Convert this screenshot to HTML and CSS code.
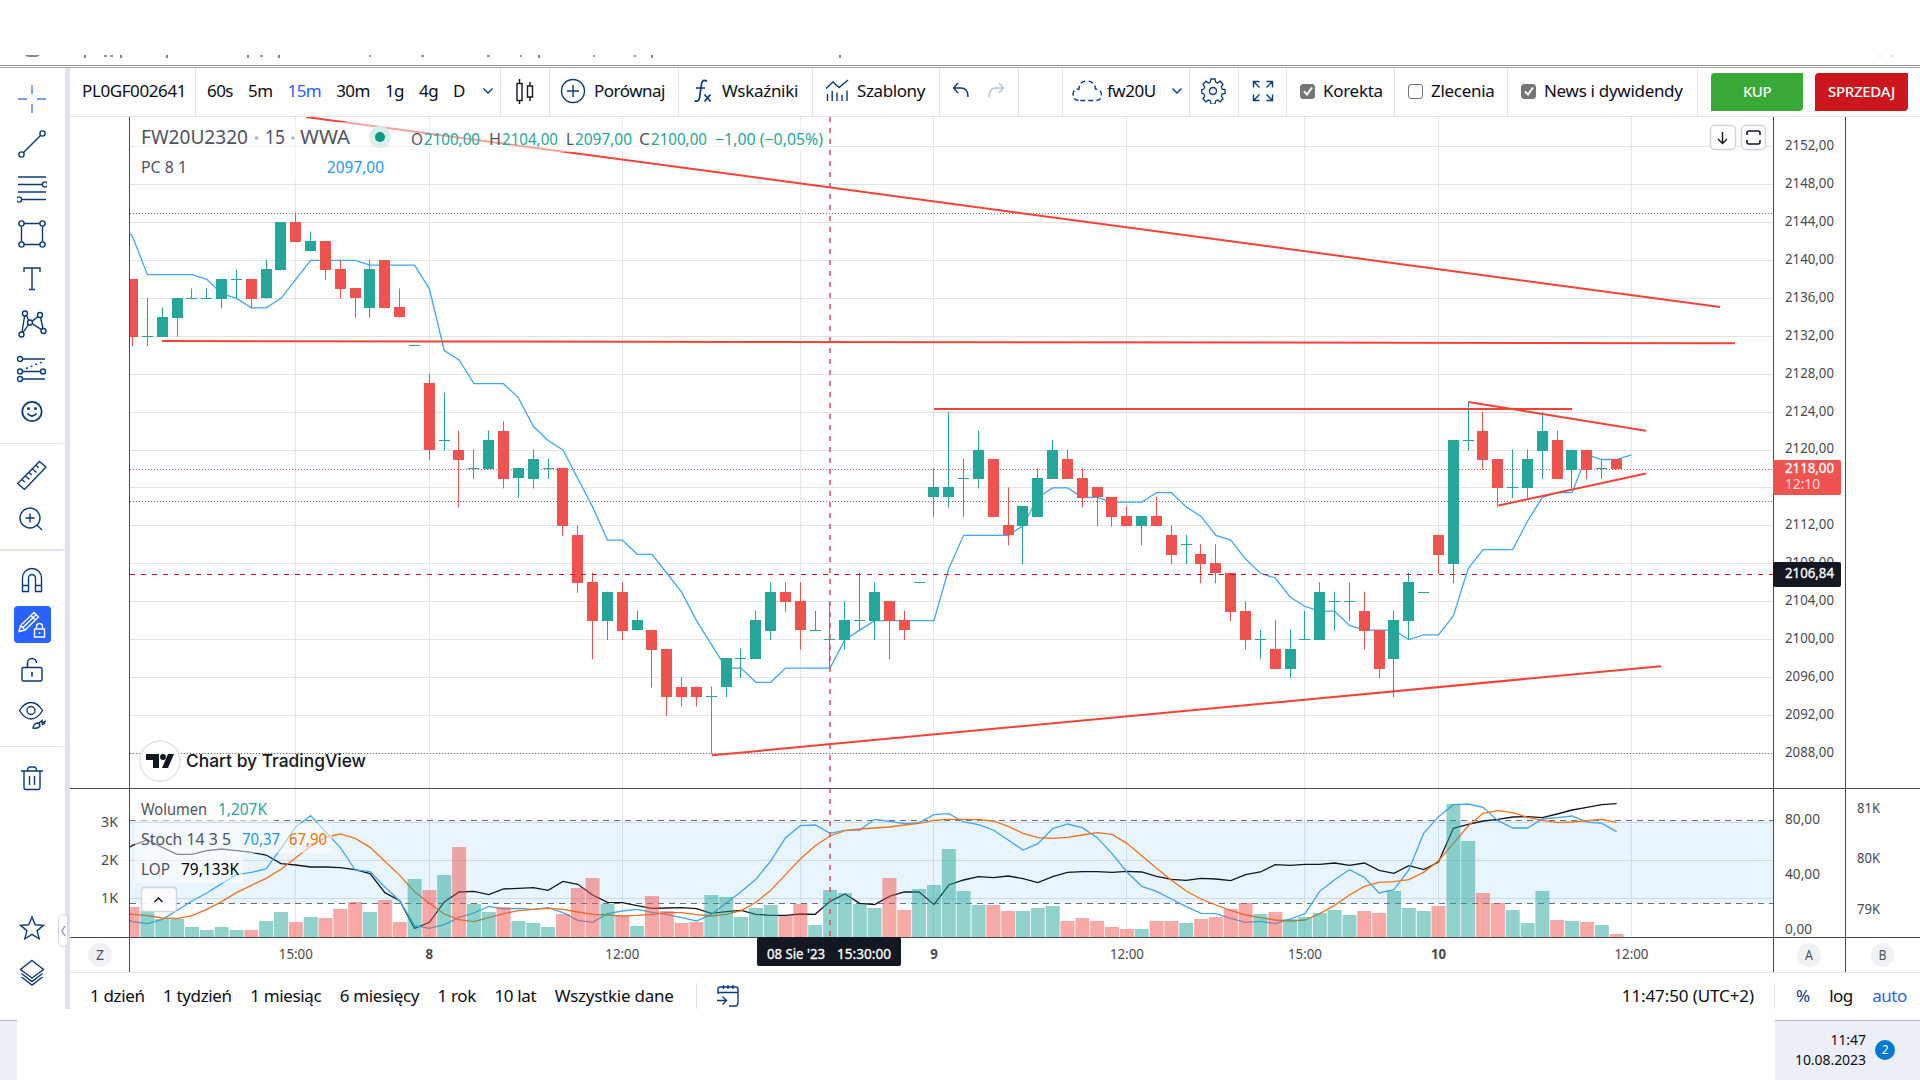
FILE: index.html
```html
<!DOCTYPE html>
<html lang="pl">
<head>
  <meta charset="UTF-8">
  <title>FW20U2320</title>
  <link rel="stylesheet" href="styles.css">
</head>
<body>
  <div class="browser-edge">
    <svg width="1920" height="3" viewBox="0 55 1920 3">
      <path d="M25 55h15q-2 2-4 2h-7q-3 0-4-2z" fill="#888"/>
      <path d="M85 55v3M121 55v3M167 55v3M248 55v3M279 55v3M539 55v3M652 55v3M840 55v3" stroke="#555" stroke-width="1.4"/>
      <path d="M104 56h3M110 56h3M260 56h3M369 56h2M421 56h3M487 56h3M520 56h2M593 56h2M634 56h2" stroke="#777" stroke-width="1.4"/>
      <path d="M1879 56h2M1891 56h3" stroke="#ddd"/>
    </svg>
  </div>
  <div class="terminal">
    <div class="tools">
      <div class="group group-draw">
        <div class="tool"><svg viewBox="0 0 30 30" class="blue"><path d="M15 1v9M15 20v9M1 15h9M20 15h9"/></svg></div>
        <div class="tool"><svg viewBox="0 0 30 30"><circle cx="4.500" cy="25.500" r="2.600"/><circle cx="25.500" cy="4.500" r="2.600"/><path d="M6.500 23.500l17-17"/></svg></div>
        <div class="tool"><svg viewBox="0 0 30 30"><path d="M1 3h28M1 10.500h24M1 18h28M5 25.500h24"/><circle cx="28" cy="10.500" r="2.600"/><circle cx="2" cy="25.500" r="2.600"/></svg></div>
        <div class="tool"><svg viewBox="0 0 30 30"><circle cx="4.500" cy="4.500" r="2.600"/><circle cx="25.500" cy="4.500" r="2.600"/><circle cx="4.500" cy="25.500" r="2.600"/><circle cx="25.500" cy="25.500" r="2.600"/><path d="M7 4.500h16M7 25.500h16M4.500 7v16M25.500 7v16"/></svg></div>
        <div class="tool"><svg viewBox="0 0 30 30"><path d="M7 8V4h16v4M15 4v21M12 25.500h6"/></svg></div>
        <div class="tool"><svg viewBox="0 0 30 30"><circle cx="8" cy="4.500" r="2.500"/><circle cx="23" cy="6" r="2.500"/><circle cx="13" cy="13.500" r="2.500"/><circle cx="4.500" cy="25.500" r="2.500"/><circle cx="26.500" cy="22" r="2.500"/><path d="M7.600 7L5 23M9.300 6.500l2.600 4.800M15 12.200l6-4.600M11.600 15.600L6 23.300M15 14.700l9.500 6M23.500 8.500l2.500 11"/></svg></div>
        <div class="tool"><svg viewBox="0 0 30 30"><circle cx="3" cy="5" r="2.500"/><circle cx="3" cy="17.500" r="2.500"/><circle cx="26" cy="17.500" r="2.500"/><circle cx="3" cy="25" r="2.500"/><path d="M5.500 5H28M5.500 17.500h18M5.500 25H28"/><path d="M9 14.500l17-7" stroke-dasharray="2 3"/></svg></div>
        <div class="tool"><svg viewBox="0 0 30 30"><circle cx="15" cy="12.500" r="9.700" stroke-width="1.800"/><circle cx="11.500" cy="9.500" r="1.500" class="solid"/><circle cx="18.500" cy="9.500" r="1.500" class="solid"/><path d="M10.500 14.500q4.500 5 9 0" stroke-width="1.800"/></svg></div>
      </div>
      <div class="group group-measure">
        <div class="tool"><svg viewBox="0 0 30 30"><path d="M.8 23.500L22.500 1.500l6.500 5.500L7.500 29.500zM5 19.500l2.800 2.600M8.500 16l4 3.600M12 12.400l2.700 2.600M15.500 8.900l4 3.600M19 5.300l2.700 2.500"/></svg></div>
        <div class="tool"><svg viewBox="0 0 30 30"><circle cx="13" cy="13" r="10"/><path d="M13 8.500v9M8.500 13h9M20 20l5 5"/></svg></div>
      </div>
      <div class="group group-lock">
        <div class="tool"><svg viewBox="0 0 30 30"><path d="M5.500 26.500V13a9.500 9.500 0 0 1 19 0v13.500h-6V13a3.500 3.500 0 0 0-7 0v13.500zM5.500 20.500h6M18.500 20.500h6"/></svg></div>
        <div class="tool"><div class="active"><svg viewBox="0 0 30 30"><path d="M2 21.500l1.500-6L17 2.500l4.500 4.500L8 20zM3.500 15.500L8 20M14 5.500l4.500 4.500M5.700 17.700L19 4.700"/><rect x="17.500" y="19" width="10" height="8"/><path d="M19.500 19v-2.500a3 3 0 0 1 6 0V19M22.500 22v2"/></svg></div></div>
        <div class="tool"><svg viewBox="0 0 30 30"><rect x="5" y="12.500" width="20" height="13.500" rx="1.500"/><path d="M10.500 12V8a4.500 4.500 0 0 1 9 0M15 17v4.500" stroke-width="1.600"/></svg></div>
        <div class="tool"><svg viewBox="0 0 30 30"><path d="M2.500 10.500q5-8 11.500-8t11.500 8q-5 8.500-11.500 8.500T2.500 10.500z"/><circle cx="14" cy="10.500" r="4"/><path d="M16 28q1-5 5-5 2 1 2 3-2 3-7 2zM22 23l3-2.500 0 2.500 4-2M25 25l3-2"/></svg></div>
      </div>
      <div class="group group-trash">
        <div class="tool"><svg viewBox="0 0 30 30"><path d="M4 8h22M7 8v16.500q0 2 2 2h12q2 0 2-2V8M10.500 8q0-4 2.500-4h4q2.500 0 2.500 4M12.500 13v9M17.500 13v9"/></svg></div>
      </div>
      <div class="group group-last">
        <div class="tool"><svg viewBox="0 0 30 30"><path d="M15 4l3.200 7.800 8.300.5-6.400 5.300 2.100 8.200-7.200-4.500-7.200 4.500 2.100-8.200-6.400-5.300 8.300-.5z"/></svg></div>
        <div class="tool"><svg viewBox="0 0 30 30"><path d="M15 2.500L26.500 11.500 15 20 3.500 11.500zM4.500 15.500l10.500 8 10.500-8M4.500 19l10.500 8 10.500-8"/></svg></div>
      </div>
      <div class="handle"><svg width="5" height="12" viewBox="0 0 5 12"><path d="M4 1L1 6l3 5"/></svg></div>
    </div>

    <div class="main">
      <div class="toolbar">
        <div class="cell symbol">PL0GF002641</div>
        <div class="cell intervals"><span>60s</span><span>5m</span><span class="on">15m</span><span>30m</span><span>1g</span><span>4g</span><span>D</span><svg width="12" height="8" viewBox="0 0 12 8"><path d="M1.500 1.500L6 6l4.500-4.500"/></svg></div>
        <div class="cell style"><svg width="20" height="26" viewBox="0 0 20 26" class="dark"><path d="M2 5.500h5v17H2zM4.500 1v4M4.500 23v3M12.500 8h5v11h-5zM15 4v4M15 19v4"/></svg></div>
        <div class="cell compare"><svg width="26" height="26" viewBox="0 0 26 26"><circle cx="13" cy="13" r="11.500"/><path d="M13 7v12M7 13h12"/></svg><span>Porównaj</span></div>
        <div class="cell indicators"><svg width="20" height="24" viewBox="0 0 20 24"><path d="M14 2.500q-4.500-3-5.500 2.500L6.500 19q-.700 4-5 3M3 9h9" stroke-width="1.700"/><path d="M11.500 15.500l6 7M17.500 15.500l-6 7" stroke-width="1.700"/></svg><span>Wskaźniki</span></div>
        <div class="cell templates"><svg width="24" height="24" viewBox="0 0 24 24"><path d="M1 9.500l7-6.500 6 5.500L23 1"/><path d="M2.500 22v-7M7.200 22V12M12 22v-8.500M17 22v-6M22 22V11.500"/></svg><span>Szablony</span></div>
        <div class="cell history"><svg width="18" height="18" viewBox="0 0 18 18"><path d="M6 1L1.500 6 6 11M2 6h7q7 0 7 9"/></svg><svg width="18" height="18" viewBox="0 0 18 18" class="off"><path d="M12 1l4.500 5-4.500 5M16 6H9q-7 0-7 9"/></svg></div>
        <div class="cell blank"></div>
        <div class="cell layout"><svg width="32" height="24" viewBox="0 0 32 24"><path d="M7.500 21.500q-5.500-.500-5.500-6t6-5.500q.500-8 8-8t8.500 8q6 .500 6 6t-6 5.500z" stroke-dasharray="5 3"/></svg><span>fw20U</span><svg width="12" height="8" viewBox="0 0 12 8" class="caret"><path d="M1.500 1.500L6 6l4.500-4.500"/></svg></div>
        <div class="cell gear"><svg width="26" height="26" viewBox="0 0 26 26"><path d="M10.700 1h4.600l.6 3.300 2.300 1 2.700-2 3.200 3.200-1.900 2.800.9 2.200 3.300.5v4l-3.300.7-.9 2.300 1.900 2.700-3.200 3.200-2.700-1.900-2.300.9-.6 3.300h-4.600l-.6-3.300-2.300-.9-2.700 1.900-3.200-3.200 1.900-2.700-.9-2.300L.6 16v-4l2.300-.5.9-2.200-1.900-2.800 3.200-3.200 2.700 2 2.300-1z" transform="translate(1.300 0) scale(.900 .960)"/><circle cx="13" cy="13" r="3.500"/></svg></div>
        <div class="cell full"><svg width="22" height="22" viewBox="0 0 22 22"><path d="M1.500 7.500v-6h6M1.500 1.500l6 6M14.500 1.500h6v6M20.500 1.500l-6 6M1.500 14.500v6h6M1.500 20.500l6-6M20.500 14.500v6h-6M20.500 20.500l-6-6"/></svg></div>
        <div class="cell check c1"><i class="box ticked"><svg width="12" height="12" viewBox="0 0 12 12"><path d="M2 6.500L5 9.500 10 2.500"/></svg></i><span>Korekta</span></div>
        <div class="cell check c2"><i class="box"></i><span>Zlecenia</span></div>
        <div class="cell check c3"><i class="box ticked"><svg width="12" height="12" viewBox="0 0 12 12"><path d="M2 6.500L5 9.500 10 2.500"/></svg></i><span>News i dywidendy</span></div>
        <div class="trade buy">KUP</div>
        <div class="trade sell">SPRZEDAJ</div>
      </div>

      <svg id="chart" class="chart" width="1850" height="855" viewBox="70 117 1850 855"></svg>

      <div class="footer">
        <div class="ranges"><span>1 dzień</span><span>1 tydzień</span><span>1 miesiąc</span><span>6 miesięcy</span><span>1 rok</span><span>10 lat</span><span>Wszystkie dane</span></div>
        <div class="goto"><svg width="24" height="24" viewBox="0 0 24 24"><path d="M2 10V5q0-2 2-2h16q2 0 2 2v14q0 3-3 3h-6M2 8.500h20M7.500 1v4M12 1v4M17 1v4M1 16.500h9M6.500 12.500l4 4-4 4"/></svg></div>
        <div class="clock">11:47:50 (UTC+2)</div>
        <div class="scale"><span class="pct">%</span><span>log</span><span class="on">auto</span></div>
      </div>
    </div>
  </div>
  <div class="taskbar">
    <div class="start"></div>
    <div class="tray">
      <div class="time">11:47<br>10.08.2023</div>
      <div class="badge">2</div>
    </div>
  </div>
  <script src="chart.js"></script>
</body>
</html>
```
FILE: styles.css
```css
* {
  box-sizing: border-box;
}
body {
  margin: 0;
  width: 1920px;
  height: 1080px;
  overflow: hidden;
  background: #fff;
  color: #0c0e15;
  font-family: "Noto Sans", "Open Sans", sans-serif;
  font-size: 17px;
  letter-spacing: -0.5px;
}
svg {
  fill: none;
  stroke: #0b3a78;
  stroke-width: 1.4;
  flex: none;
}
.browser-edge {
  height: 68px;
  padding-top: 55px;
  border-bottom: 1px solid #aaa;
}
.browser-edge svg {
  display: block;
  stroke: none;
}
.browser-edge::after {
  content: "";
  display: block;
  margin-top: 7px;
  border-top: 1px solid #999;
}
.terminal {
  display: flex;
  height: 941px;
}

/* left drawing tools */
.tools {
  width: 70px;
  border-right: 5px solid #e0e3eb;
  display: flex;
  flex-direction: column;
  position: relative;
}
.group {
  flex: none;
  border-bottom: 1px solid #e0e3eb;
  border-radius: 0 0 4px 0;
}
.group-draw {
  height: 376px;
  padding-top: 8px;
}
.group-measure {
  height: 107px;
  padding-top: 8px;
  border-bottom-width: 2px;
}
.group-lock {
  height: 196px;
  padding-top: 6px;
}
.group-trash {
  height: 157px;
  padding-top: 8px;
  border: none;
}
.group-last {
  border: none;
  padding-top: 1px;
}
.tool {
  height: 45px;
  padding-right: 1px;
  display: flex;
  align-items: center;
  justify-content: center;
}
.tool svg {
  width: 30px;
  height: 30px;
}
.tool .active svg {
  stroke: #fff;
}
.tool .blue {
  stroke: #4f7bff;
}
.solid {
  fill: #0b3a78;
  stroke: none;
}
.active {
  width: 37px;
  height: 37px;
  border-radius: 4px;
  background: #2962ff;
  display: flex;
  align-items: center;
  justify-content: center;
}
.handle {
  position: absolute;
  left: 58px;
  top: 846px;
  width: 10px;
  height: 33px;
  border: 1px solid #d5d9e4;
  border-radius: 5px;
  background: #fff;
  display: flex;
  align-items: center;
  justify-content: center;
}
.handle svg {
  stroke: #8a9bb8;
}

/* top toolbar */
.main {
  width: 1850px;
}
.toolbar {
  height: 49px;
  display: flex;
  border-bottom: 1px solid #e0e3eb;
}
.cell {
  border-right: 1px solid #e0e3eb;
  display: flex;
  align-items: center;
  padding-bottom: 2px;
  white-space: nowrap;
}
.cell span {
  margin-top: -2px;
}
.symbol {
  width: 126px;
  padding-left: 12px;
  padding-bottom: 4px;
  letter-spacing: -0.4px;
}
.intervals {
  width: 305px;
  padding-left: 11px;
  gap: 15px;
  letter-spacing: -0.55px;
}
.intervals svg {
  margin-left: 2px;
}
.on {
  color: #2962ff;
}
.style {
  width: 49px;
  justify-content: center;
}
.dark {
  stroke: #131722;
}
.compare {
  width: 129px;
  padding-left: 10px;
  gap: 8px;
}
.indicators {
  width: 134px;
  padding-left: 14px;
  gap: 9px;
  letter-spacing: -0.3px;
}
.templates {
  width: 127px;
  padding-left: 12px;
  gap: 8px;
  letter-spacing: -0.4px;
}
.history {
  width: 79px;
  padding-left: 12px;
  gap: 17px;
}
.off {
  opacity: .3;
}
.blank {
  width: 44px;
}
.layout {
  width: 127px;
  padding-left: 8px;
  gap: 4px;
}
.caret {
  margin-left: 11px;
}
.gear {
  width: 49px;
  padding-right: 2px;
  justify-content: center;
}
.full {
  width: 48px;
  justify-content: center;
}
.check {
  padding-left: 13px;
  gap: 8px;
  letter-spacing: -0.3px;
}
.c1 {
  width: 108px;
}
.c2 {
  width: 113px;
}
.c3 {
  width: 190px;
}
.box {
  width: 15px;
  height: 15px;
  border: 1px solid #767676;
  border-radius: 3px;
  display: flex;
  align-items: center;
  justify-content: center;
}
.ticked {
  background: #757575;
}
.ticked svg {
  stroke: #fff;
  stroke-width: 2;
}
.trade {
  width: 92px;
  height: 38px;
  margin: 5px 0 0 13px;
  border-radius: 4px 0;
  background: #38a935;
  color: #fff;
  font-size: 15px;
  font-weight: 500;
  line-height: 37px;
  text-align: center;
}
.sell {
  width: 93px;
  margin-left: 12px;
  background: #cb161d;
  letter-spacing: -0.3px;
}

/* chart */
.chart {
  display: block;
  stroke: none;
  letter-spacing: 0;
}

/* bottom bar */
.footer {
  height: 37px;
  border-top: 1px solid #e0e3eb;
  padding-top: 10px;
  display: flex;
  line-height: 26px;
  white-space: nowrap;
}
.ranges {
  width: 627px;
  padding-left: 20px;
  display: flex;
  gap: 18.5px;
  letter-spacing: -0.36px;
  border-right: 1px solid #e0e3eb;
}
.ranges span:last-child {
  letter-spacing: -0.25px;
}
.goto {
  width: 900px;
  padding: 1px 0 0 19px;
}
.clock {
  width: 178px;
  padding-right: 20px;
  text-align: right;
  letter-spacing: -0.1px;
  border-right: 1px solid #e0e3eb;
}
.scale {
  display: flex;
  padding-left: 21px;
  gap: 19.5px;
}
.pct {
  color: #0b3a78;
}

/* system tray */
.taskbar {
  margin-top: 11px;
  height: 60px;
  display: flex;
  justify-content: space-between;
}
.start {
  width: 17px;
  background: #eceff8;
  border-top: 1px solid #bbb;
}
.tray {
  width: 145px;
  background: #eceff8;
  border-top: 1px solid #b8bac4;
  display: flex;
  align-items: center;
  justify-content: flex-end;
  padding: 0 25px 2px 0;
  gap: 9px;
}
.time {
  font-size: 14px;
  line-height: 20px;
  letter-spacing: -0.05px;
  text-align: right;
}
.badge {
  width: 20px;
  height: 20px;
  border-radius: 50%;
  background: #0078d4;
  color: #fff;
  font-size: 12px;
  line-height: 20px;
  text-align: center;
}
```
FILE: chart.js
```js
// open/close direction, body top, body bottom, high, low
var bars = [
  'r 2138 2132 2138 2131', 'g 2132 2132 2136 2131', 'g 2134 2132 2135 2132', 'g 2136 2134 2136 2132',
  'g 2136 2136 2137 2136', 'g 2136 2136 2137 2136', 'g 2138 2136 2138 2135', 'g 2138 2138 2139 2136',
  'r 2138 2136 2138 2135', 'g 2139 2136 2140 2136', 'g 2144 2139 2144 2139', 'r 2144 2142 2145 2142',
  'g 2142 2141 2143 2141', 'r 2142 2139 2142 2138', 'r 2139 2137 2140 2136', 'r 2137 2136 2137 2134',
  'g 2139 2135 2140 2134', 'r 2140 2135 2140 2135', 'r 2135 2134 2137 2134', 'g 2131 2131 2131 2131',
  'r 2127 2120 2128 2119', 'g 2121 2121 2126 2120', 'r 2120 2119 2122 2114', 'g 2118 2118 2120 2117',
  'g 2121 2118 2122 2118', 'r 2122 2117 2123 2116', 'g 2118 2117 2118 2115', 'g 2119 2117 2120 2116',
  'g 2118 2118 2119 2117', 'r 2118 2112 2118 2111', 'r 2111 2106 2112 2105', 'r 2106 2102 2107 2098',
  'g 2105 2102 2105 2100', 'r 2105 2101 2106 2100', 'g 2102 2101 2103 2101', 'r 2101 2099 2101 2095',
  'r 2099 2094 2099 2092', 'r 2095 2094 2096 2093', 'r 2095 2094 2095 2093', 'g 2094 2094 2095 2088',
  'g 2098 2095 2098 2094', 'g 2098 2098 2099 2096', 'g 2102 2098 2103 2098', 'g 2105 2101 2106 2100',
  'r 2105 2104 2106 2103', 'r 2104 2101 2106 2099', 'g 2101 2101 2103 2101', 'g 2100 2100 2104 2097',
  'g 2102 2100 2104 2099', 'g 2102 2102 2107 2101', 'g 2105 2102 2106 2100', 'r 2104 2102 2104 2098',
  'r 2102 2101 2103 2100', 'g 2106 2106 2106 2106', 'g 2116 2115 2118 2113', 'g 2116 2115 2124 2114',
  'g 2117 2117 2119 2113', 'g 2120 2117 2122 2116', 'r 2119 2113 2119 2113', 'r 2112 2111 2116 2110',
  'g 2114 2112 2114 2108', 'g 2117 2113 2118 2113', 'g 2120 2117 2121 2117', 'r 2119 2117 2120 2117',
  'r 2117 2115 2118 2114', 'r 2116 2115 2116 2112', 'r 2115 2113 2115 2112', 'r 2113 2112 2114 2112',
  'g 2113 2112 2113 2110', 'r 2113 2112 2115 2112', 'r 2111 2109 2112 2108', 'g 2110 2110 2111 2108',
  'r 2109 2108 2110 2106', 'r 2108 2107 2110 2106', 'r 2107 2103 2107 2102', 'r 2103 2100 2104 2099',
  'g 2100 2100 2101 2098', 'r 2099 2097 2102 2097', 'g 2099 2097 2101 2096', 'g 2100 2100 2103 2100',
  'g 2105 2100 2106 2100', 'g 2104 2104 2105 2101', 'g 2104 2104 2106 2102', 'r 2103 2101 2105 2099',
  'r 2101 2097 2101 2096', 'g 2102 2098 2103 2094', 'g 2106 2102 2107 2100', 'g 2105 2105 2105 2105',
  'r 2111 2109 2111 2107', 'g 2121 2108 2121 2106', 'g 2121 2121 2125 2120', 'r 2122 2119 2124 2118',
  'r 2119 2116 2119 2114', 'g 2116 2116 2120 2115', 'g 2119 2116 2120 2115', 'g 2122 2120 2124 2117',
  'r 2121 2117 2122 2117', 'g 2120 2118 2120 2116', 'r 2120 2118 2120 2117', 'g 2118 2118 2119 2117',
  'r 2119 2118 2119 2118'
].map(function (s) {
  var p = s.split(' ');
  return { dir: p[0], top: +p[1], bottom: +p[2], high: +p[3], low: +p[4] };
});

// bar heights of the volume pane
var volume = [30,26,18,18,10,7,10,7,7,16,25,15,20,19,28,35,25,37,15,58,47,62,90,33,25,30,16,14,10,23,49,59,33,21,11,41,26,14,15,
  42,40,20,29,32,21,33,12,47,44,33,29,59,27,48,52,88,46,32,32,26,26,29,31,16,19,16,10,8,8,16,16,14,18,20,28,34,23,
  25,18,20,24,27,22,26,24,46,29,26,31,133,96,44,34,27,14,46,17,16,15,12,3];

// oscillator curves, in thirds of a pixel below y = 780
var stochK = [425,431,418,391,363,339,311,284,277,267,205,140,107,155,203,270,275,321,363,437,445,434,412,399,379,387,385,388,383,398,421,427,401,393,388,397,403,413,423,
  403,369,335,298,243,173,137,135,160,151,150,118,124,131,128,104,101,126,134,150,180,210,191,146,132,143,173,221,276,319,334,357,380,400,401,415,427,424,
  431,417,401,334,299,269,292,339,329,270,160,110,74,72,82,122,144,144,117,113,108,126,130,155];
var stochD = [403,407,414,416,407,388,365,338,316,295,268,233,199,172,162,175,202,244,286,335,370,402,419,425,413,401,392,388,385,388,396,403,405,408,406,403,398,398,404,
  408,403,392,367,331,284,237,197,168,152,147,144,141,135,130,121,118,118,119,123,139,160,173,175,172,165,158,163,190,227,265,301,333,357,375,391,405,413,
  420,423,420,401,376,345,319,307,305,299,277,242,190,138,100,92,98,112,121,128,126,122,118,127];
var lop = [196,180,202,223,223,212,207,212,217,225,251,255,261,261,263,269,281,338,362,445,427,366,336,334,344,327,325,323,331,304,313,345,367,368,377,385,384,383,386,
  400,395,391,403,406,406,402,403,364,342,370,374,349,336,336,374,315,300,290,293,288,296,308,290,277,275,275,277,274,276,289,298,301,295,297,302,284,276,
  254,256,253,253,249,256,249,271,280,257,269,246,145,133,123,118,111,110,113,102,90,82,74,71];

var GREEN = '#26a69a', RED = '#ef5350';
var out = '';

function x(i) { return 132.6 + 14.84 * i; }
function y(p) { return 222.5 + (2144 - p) * 9.48; }
function line(x1, y1, x2, y2, color, width, dash) {
  out += '<path d="M' + x1 + ' ' + y1 + 'L' + x2 + ' ' + y2 + '" stroke="' + color + '" stroke-width="' + (width || 1) + '"' + (dash ? ' stroke-dasharray="' + dash + '"' : '') + '/>';
}
function rect(rx, ry, w, h, fill, extra) {
  out += '<rect x="' + rx + '" y="' + ry + '" width="' + w + '" height="' + h + '" fill="' + fill + '" ' + (extra || '') + '/>';
}
// label squeezed between x1 and x2
function text(s, x1, x2, base, size, color, extra) {
  out += '<text x="' + x1 + '" y="' + base + '" font-size="' + size + '" fill="' + color + '" textLength="' + (x2 - x1) + '" lengthAdjust="spacingAndGlyphs" ' + (extra || '') + '>' + s + '</text>';
}
function curve(points, color) {
  out += '<polyline points="' + points.join(' ') + '" stroke="' + color + '" stroke-width="1.3"/>';
}
function osc(values, first, color) {
  curve(['130,' + (780 + first / 3)].concat(values.map(function (v, i) { return x(i) + ',' + (780 + v / 3); })), color);
}

// grid
[11, 20, 33, 45, 54, 67, 79, 88, 101].forEach(function (i) {
  line(Math.floor(x(i)) + .5, 117, Math.floor(x(i)) + .5, 937, '#e6e6e6');
});
for (var p = 2152; p >= 2088; p -= 4) {
  line(130, Math.floor(y(p)) + .5, 1773, Math.floor(y(p)) + .5, '#e3e3e3');
}
[822.5, 860.5, 898.5].forEach(function (v) { line(130, v, 1773, v, '#e3e3e3'); });

// lower pane
rect(130, 820.5, 1643, 83, '#2196f3', 'opacity=".1"');
line(130, 820.5, 1773, 820.5, '#6b7080', 1, '6 5');
line(130, 903.5, 1773, 903.5, '#6b7080', 1, '6 5');
osc(lop, 201, '#131722');
osc(stochK, 421, '#42a5f5');
osc(stochD, 402, '#f2711c');
volume.forEach(function (h, i) {
  var left = Math.max(130, x(i) - 7);
  rect(left.toFixed(1), 937 - h, (x(i) + 7 - left).toFixed(1), h, bars[i].dir == 'g' ? GREEN : RED, 'opacity=".5"');
});

// price levels
[[213.5, '#777'], [469.5, RED], [501.5, '#777'], [753.5, '#777']].forEach(function (l) {
  line(130, l[0], 1773, l[0], l[1], 1, '1 2');
});

// mid of the high/low range over the previous 8 bars
var channel = [2142.5, 2138.5, 2138.5, 2138.5, 2138.5, 2138, 2136.5, 2136];
for (var i = 8; i <= bars.length; i++) {
  var part = bars.slice(i - 8, i);
  var hi = Math.max.apply(null, part.map(function (b) { return b.high; }));
  var lo = Math.min.apply(null, part.map(function (b) { return b.low; }));
  channel.push((hi + lo) / 2);
}
curve(['130,233.5'].concat(channel.map(function (v, i) { return x(i) + ',' + y(v); })), '#42a5f5');

// candles
bars.forEach(function (b, i) {
  var c = b.dir == 'g' ? GREEN : RED;
  var mid = Math.floor(x(i) - .1);
  if (b.high != b.low) line(mid + .5, y(b.high) - .5, mid + .5, y(b.low) + .5, c);
  var left = Math.max(130, mid - 5);
  rect(left, Math.round(y(b.top) - .5), mid + 6 - left, Math.max(1, Math.round(y(b.bottom) - y(b.top)) + 1), c);
});

// trend lines
[[306, 117, 1720, 307], [162, 341, 1735, 343.3], [934, 409, 1572, 409], [1468.4, 402, 1646, 430.7],
 [1498.5, 505.5, 1646, 473.4], [712, 755.3, 1661, 666.2]].forEach(function (t) {
  line(t[0], t[1], t[2], t[3], '#f44336', 2);
});

// crosshair
line(130, 574.5, 1773, 574.5, '#c8102e', 1, '5 6');
line(830, 117, 830, 937, '#d8505f', 1.5, '5 6');

// frames
line(129.5, 117, 129.5, 972, '#4a4a4a');
line(1773.5, 117, 1773.5, 972, '#4a4a4a');
line(1845.5, 117, 1845.5, 972, '#4a4a4a');
line(70, 788.5, 1920, 788.5, '#4a4a4a');
line(70, 937.5, 1920, 937.5, '#4a4a4a');

// main legend
rect(135, 122, 692, 30, '#fff', 'opacity=".5"');
rect(135, 153, 254, 28, '#fff', 'opacity=".5"');
text('FW20U2320', 141, 248, 144, 19, '#50535e');
text('15', 265, 285, 144, 19, '#50535e');
text('WWA', 300, 350, 144, 19, '#50535e');
out += '<circle cx="256.500" cy="138" r="1.800" fill="#b2b5be"/><circle cx="293" cy="138" r="1.800" fill="#b2b5be"/>';
out += '<circle cx="380" cy="137" r="11" fill="#d9efec"/><circle cx="380" cy="137" r="5" fill="#089981"/>';
[['O', '2100,00', 411, 424, 480], ['H', '2104,00', 489, 502, 558], ['L', '2097,00', 566, 575, 632], ['C', '2100,00', 639, 651, 707]].forEach(function (v) {
  text(v[0], v[2], v[3] - 1, 145, 15.5, '#50535e');
  text(v[1], v[3], v[4], 145, 15.5, GREEN);
});
text('−1,00 (−0,05%)', 715, 823, 145, 15.5, GREEN);
text('PC 8 1', 141, 187, 173, 15.5, '#50535e');
text('2097,00', 327, 384, 173, 15.5, '#2196f3');

// lower legend
rect(135, 793, 140, 28, '#fff', 'opacity=".5"');
rect(135, 823, 197, 30, '#fff', 'opacity=".5"');
rect(135, 853, 108, 30, '#fff', 'opacity=".5"');
text('Wolumen', 141, 207, 815, 15.5, '#50535e');
text('1,207K', 218, 267, 815, 15.5, GREEN);
text('Stoch 14 3 5', 141, 231, 845, 15.5, '#50535e');
text('70,37', 242, 280, 845, 15.5, '#2196f3');
text('67,90', 289, 327, 845, 15.5, '#ff6d00');
text('LOP', 141, 170, 875, 15.5, '#50535e');
text('79,133K', 181, 239, 875, 15.5, '#000');
rect(141.5, 887.5, 35, 24, '#fff', 'rx="3" stroke="#d1d4dc" opacity=".9"');
out += '<path d="M154.500 902l4-4 4 4" stroke="#131722" stroke-width="1.500"/>';

// logo
out += '<circle cx="160" cy="761" r="20" fill="#fff" stroke="#e0e3eb"/>';
out += '<path d="M146 754h13v14h-6v-8h-7zM168 754h6l-6 14h-6z" fill="#131722"/><circle cx="163" cy="757" r="2.900" fill="#131722"/>';
text('Chart by TradingView', 186, 366, 767, 17.5, '#131722', 'font-family="Inter" font-weight="500"');

// pane buttons
rect(1710.5, 125.5, 25, 24, '#fff', 'rx="4" stroke="#d1d4dc"');
rect(1741.5, 125.5, 24, 24, '#fff', 'rx="4" stroke="#d1d4dc"');
out += '<path d="M1722.500 132v11M1718 139l4.500 4.500 4.500-4.500" stroke="#131722" stroke-width="1.400"/>';
out += '<path d="M1747 135v-2q0-2 2-2h9q2 0 2 2v2M1747 140v2q0 2 2 2h9q2 0 2-2v-2" stroke="#131722" stroke-width="1.600"/>';

// price axis
for (p = 2152; p >= 2088; p -= 4) {
  if (p != 2116) text(p + ',00', 1785, 1834, Math.round(y(p) + 3.4), 14, '#4a4a4a');
}
rect(1773, 460, 68, 35, RED, 'rx="2"');
text('2118,00', 1785, 1834, 473, 14, '#fff', 'stroke="#fff" stroke-width=".300"');
text('12:10', 1785, 1820, 489, 14, '#fbdad9');
rect(1773, 562, 68, 25, '#131722', 'rx="2"');
text('2106,84', 1785, 1834, 578, 14, '#fff', 'stroke="#fff" stroke-width=".300"');
[['80,00', 824], ['40,00', 879]].forEach(function (l) { text(l[0], 1785, 1820, l[1], 14, '#4a4a4a'); });
text('0,00', 1785, 1812, 934, 14, '#4a4a4a');
[['81K', 813], ['80K', 863], ['79K', 914]].forEach(function (l) { text(l[0], 1857, 1880, l[1], 14, '#4a4a4a'); });
[['3K', 827], ['2K', 865], ['1K', 903]].forEach(function (l) { text(l[0], 101, 118, l[1], 14, '#4a4a4a'); });

// time axis
[[11, '15:00'], [20, '8'], [33, '12:00'], [54, '9'], [67, '12:00'], [79, '15:00'], [88, '10'], [101, '12:00']].forEach(function (t) {
  var w = t[1].length * 3.8 - (t[1].length == 5 ? 2 : 0);
  text(t[1], x(t[0]) - w, x(t[0]) + w, 959, 14, '#4a4a4a', t[1].length < 3 ? 'font-weight="700"' : '');
});
rect(757, 937, 144, 29, '#131722', 'rx="2"');
text("08 Sie '23", 767, 825, 959, 14, '#fff', 'stroke="#fff" stroke-width=".300"');
text('15:30:00', 837, 891, 959, 14, '#fff', 'stroke="#fff" stroke-width=".300"');
[[100, 'Z'], [1809, 'A'], [1882.5, 'B']].forEach(function (b) {
  out += '<circle cx="' + b[0] + '" cy="955" r="12" fill="#f0f1f5"/>';
  text(b[1], b[0] - 4, b[0] + 4, 960, 14, '#50535e');
});

document.getElementById('chart').innerHTML = out;
```
